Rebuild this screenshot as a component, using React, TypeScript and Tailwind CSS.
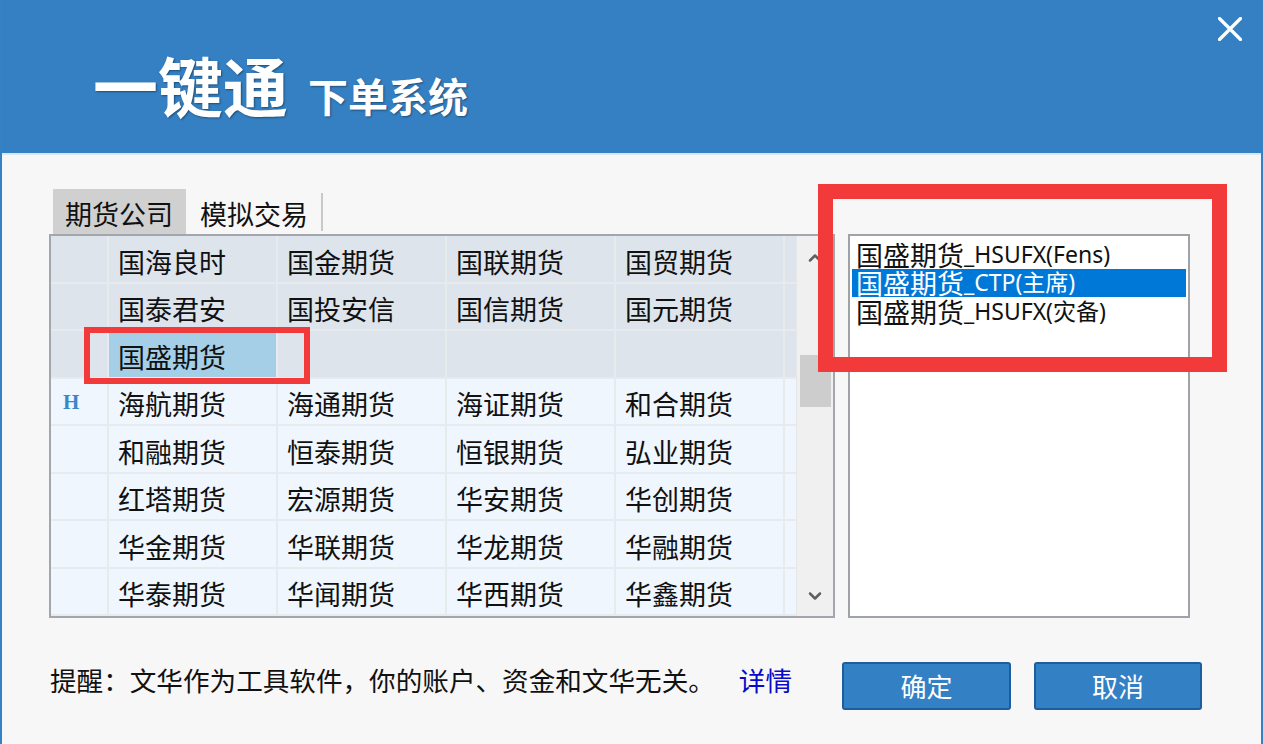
import { ChevronUp, ChevronDown } from "lucide-react"

const rows: string[][] = [
    ["国海良时", "国金期货", "国联期货", "国贸期货"],
    ["国泰君安", "国投安信", "国信期货", "国元期货"],
    ["国盛期货", "", "", ""],
    ["海航期货", "海通期货", "海证期货", "和合期货"],
    ["和融期货", "恒泰期货", "恒银期货", "弘业期货"],
    ["红塔期货", "宏源期货", "华安期货", "华创期货"],
    ["华金期货", "华联期货", "华龙期货", "华融期货"],
    ["华泰期货", "华闻期货", "华西期货", "华鑫期货"],
]

const lines = [
    { name: "国盛期货", tail: "_HSUFX(Fens)" },
    { name: "国盛期货", tail: "_CTP(主席)" },
    { name: "国盛期货", tail: "_HSUFX(灾备)" },
]

const CompanyGrid = () => {
    return (
        <div className="flex w-[786px] h-[384px] border-2 border-[#a3a6ac] bg-[#eff6fd]">
            <div className="flex flex-col w-[745px]">
                {rows.map((row, i) => {
                    const top = i < 3
                    const bg = top ? "bg-[#dee4ec]" : "bg-[#eff6fd]"
                    return (
                        <div key={i} className={`flex h-[47.5px] ${bg}`}>
                            <div className="w-[58px] shrink-0 border-r-2 border-b-2 border-[#e8ebee] flex items-center pl-[12px] pt-[3px]">
                                {i === 3 && (
                                    <span className="text-[21px] leading-none font-bold text-[#3a86c9] font-['Liberation_Serif',serif]">H</span>
                                )}
                            </div>
                            {row.map((name, j) => {
                                const selected = i === 2 && j === 0
                                return (
                                    <div
                                        key={j}
                                        className={`w-[169px] shrink-0 border-r-2 border-b-2 border-[#e8ebee] flex items-center pl-[9px] pt-[5px] text-[27px] leading-none text-[#111] ${selected ? "bg-[#a4cfe7]" : ""}`}
                                    >
                                        {name}
                                    </div>
                                )
                            })}
                            <div className="flex-1 border-b-2 border-[#e8ebee]" />
                        </div>
                    )
                })}
            </div>
            <div className="w-[37px] bg-[#f0f0f0] flex flex-col items-center border-l border-[#e6e6e6]">
                <div className="h-[44px] flex items-center justify-center">
                    <ChevronUp size={20} strokeWidth={3} className="text-[#5f5f5f]" />
                </div>
                <div className="mt-[75px] w-[31px] h-[52px] bg-[#cdcdcd]" />
                <div className="flex-1" />
                <div className="h-[40px] flex items-center justify-center">
                    <ChevronDown size={20} strokeWidth={3} className="text-[#5f5f5f]" />
                </div>
            </div>
        </div>
    )
}

const AccountList = () => {
    return (
        <div className="w-[342px] h-[384px] border-2 border-[#9fa2a8] bg-white pt-[4px]">
            {lines.map((l, i) => {
                const selected = i === 1
                return (
                    <div
                        key={i}
                        className={`h-[28.5px] mx-[2px] pl-[4px] flex items-center whitespace-nowrap ${selected ? "bg-[#0078d7] text-white" : "text-[#111]"}`}
                    >
                        <span className="text-[27px] leading-[27px]">{l.name}</span>
                        <span className="text-[23px] leading-[23px] font-['Noto_Sans','Noto_Sans_CJK_SC',sans-serif]">{l.tail}</span>
                    </div>
                )
            })}
        </div>
    )
}

export default function App() {
    return (
        <div className="relative w-[1263px] h-[744px] overflow-hidden bg-[#f7f7f7] border-x-2 border-[#3481c4] font-['Noto_Sans_CJK_SC','Noto_Sans',sans-serif]">
            {/* header */}
            <div className="h-[155px] bg-[#3480c3] border-b-2 border-[#d9e6f2] flex justify-between">
                <div className="flex items-baseline pl-[91px] pt-[52px] text-white [text-shadow:1px_1px_2px_rgba(0,0,0,0.4)]">
                    <span className="text-[65px] leading-none font-bold">一键通</span>
                    <span className="ml-[20px] text-[40px] leading-none font-bold">下单系统</span>
                </div>
                <div className="pt-[17px] pr-[19px]">
                    <svg width="24" height="24" viewBox="0 0 24 24" className="block">
                        <path d="M1.5 1.5 22.5 22.5 M22.5 1.5 1.5 22.5" stroke="white" strokeWidth="3.2" strokeLinecap="round" />
                    </svg>
                </div>
            </div>

            {/* body */}
            <div className="pl-[47px] pt-[34px]">
                <div className="flex gap-[13px]">
                    <div className="flex flex-col">
                        <div className="flex items-center h-[45px] ml-[4px]">
                            <div className="h-[45px] w-[133px] bg-[#d0d0d0] flex items-center pl-[12px] pt-[3px] text-[27px] leading-none text-[#111]">
                                期货公司
                            </div>
                            <div className="ml-[14px] pt-[3px] text-[27px] leading-none text-[#111]">模拟交易</div>
                            <div className="ml-[13px] w-[2px] h-[38px] bg-[#c9c9c9]" />
                        </div>
                        <CompanyGrid />
                    </div>
                    <div className="flex flex-col pt-[45px]">
                        <AccountList />
                    </div>
                </div>

                {/* footer */}
                <div className="flex items-center mt-[44px] h-[48px]">
                    <div className="w-[793px] flex items-center pl-[1px] pb-[12px] text-[26.6px] leading-none text-[#111]">
                        <span>提醒：文华作为工具软件，你的账户、资金和文华无关。</span>
                        <span className="ml-[24px] text-[#0a0ac8]">详情</span>
                    </div>
                    <button className="w-[169px] h-[48px] bg-[#3380c4] border-2 border-[#1d5d9c] rounded-[3px] text-white text-[26px] leading-none">
                        确定
                    </button>
                    <button className="ml-[23px] w-[168px] h-[48px] bg-[#3380c4] border-2 border-[#1d5d9c] rounded-[3px] text-white text-[26px] leading-none">
                        取消
                    </button>
                </div>
            </div>

            {/* annotation boxes */}
            <div className="absolute left-[82px] top-[327px] w-[226px] h-[57px] border-[6px] border-[#f33a3a]" />
            <div className="absolute left-[816px] top-[184px] w-[409px] h-[188px] border-[15px] border-[#f33a3a]" />
        </div>
    )
}
